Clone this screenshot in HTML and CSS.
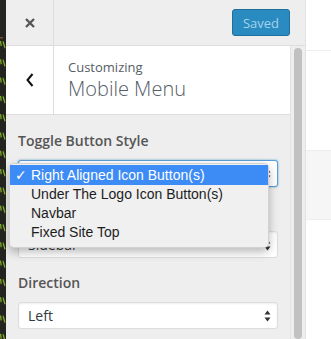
FILE: index.html
```html
<!DOCTYPE html>
<html lang="en">
  <head>
    <meta charset="UTF-8" />
    <meta name="viewport" content="width=device-width, initial-scale=1.0" />
    <title>Customizing Mobile Menu</title>
    <link rel="stylesheet" href="styles.css">
  </head>
  <body>
    <div class="editor-strip">
      <svg width="6" height="339" viewBox="0 0 6 339">
        <defs>
          <pattern id="code" x="0" y="41" width="6" height="18.3" patternUnits="userSpaceOnUse">
            <path d="M0.5 0 L1.2 5 M3 0.5 L5 7" stroke="#86b32a" stroke-width="1.2" fill="none" />
          </pattern>
        </defs>
        <rect x="0" y="37" width="3" height="1.5" fill="#7a4a2a" />
        <rect x="0" y="41" width="6" height="298" fill="url(#code)" />
      </svg>
    </div>

    <div class="customizer">
      <div class="customizer-header">
        <button class="close-btn" aria-label="Close">
          <svg width="10" height="10" viewBox="0 0 10 10">
            <path d="M1 1 L9 9 M9 1 L1 9" stroke="#555" stroke-width="2.3" />
          </svg>
        </button>
        <button class="save-btn">Saved</button>
      </div>

      <div class="customizer-body">
        <div class="panel">
          <div class="section-title">
            <button class="back-btn" aria-label="Back">
              <svg width="8" height="14" viewBox="0 0 8 14">
                <path d="M6.5 1 L1.5 7 L6.5 13" stroke="#111" stroke-width="2" fill="none" />
              </svg>
            </button>
            <div class="title">
              <span class="title-small">Customizing</span>
              <h3 class="title-main">Mobile Menu</h3>
            </div>
          </div>

          <div class="controls">
            <div class="control">
              <label class="control-label">Toggle Button Style</label>
              <div class="select-wrap">
                <div class="select focused">
                  <span class="covered">Right Aligned Icon Button(s)</span>
                  <svg class="arrows" width="7" height="12" viewBox="0 0 7 12">
                    <path d="M3.5 0.5 L6.5 4.5 L0.5 4.5 Z M3.5 11.5 L6.5 7.5 L0.5 7.5 Z" fill="#333" />
                  </svg>
                </div>
                <ul class="popup">
                  <li class="active"><span class="check">✓</span>Right Aligned Icon Button(s)</li>
                  <li><span class="check"></span>Under The Logo Icon Button(s)</li>
                  <li><span class="check"></span>Navbar</li>
                  <li><span class="check"></span>Fixed Site Top</li>
                </ul>
              </div>
            </div>

            <div class="control">
              <label class="control-label covered">Menu Style</label>
              <div class="select">
                <span class="sidebar-text">Sidebar</span>
                <svg class="arrows" width="7" height="12" viewBox="0 0 7 12">
                  <path d="M3.5 0.5 L6.5 4.5 L0.5 4.5 Z M3.5 11.5 L6.5 7.5 L0.5 7.5 Z" fill="#333" />
                </svg>
              </div>
            </div>

            <div class="control">
              <label class="control-label">Direction</label>
              <div class="select">
                <span>Left</span>
                <svg class="arrows" width="7" height="12" viewBox="0 0 7 12">
                  <path d="M3.5 0.5 L6.5 4.5 L0.5 4.5 Z M3.5 11.5 L6.5 7.5 L0.5 7.5 Z" fill="#333" />
                </svg>
              </div>
            </div>
          </div>
        </div>

        <div class="scrollbar">
          <div class="thumb"></div>
        </div>
      </div>
    </div>

    <div class="preview">
      <div class="preview-top"></div>
      <div class="preview-gap"></div>
      <div class="preview-band"></div>
    </div>
  </body>
</html>
```

FILE: styles.css
```css
body {
  display: flex;
  height: 100vh;
  margin: 0;
  overflow: hidden;
  background-color: #fff;
  font-family: "Open Sans", "Noto Sans", sans-serif;
}

.editor-strip {
  width: 6px;
  flex-shrink: 0;
  background-color: #23241f;
}

.editor-strip svg {
  display: block;
}

.customizer {
  width: 299px;
  flex-shrink: 0;
  display: flex;
  flex-direction: column;
  background-color: #eee;
}

.customizer-header {
  height: 45px;
  flex-shrink: 0;
  display: flex;
  justify-content: space-between;
  align-items: center;
  border-bottom: 1px solid #ddd;
}

button {
  font-family: inherit;
  border: none;
  background: none;
  padding: 0;
  cursor: pointer;
}

.close-btn {
  width: 48px;
  height: 45px;
  box-sizing: border-box;
  display: flex;
  justify-content: center;
  align-items: center;
  border-right: 1px solid #ddd;
}

.save-btn {
  width: 58px;
  height: 27px;
  margin-right: 15px;
  box-sizing: border-box;
  background-color: #2a8bc0;
  border: 1px solid #1f6e9b;
  border-radius: 3px;
  color: #a3d3ec;
  font-size: 13px;
}

.customizer-body {
  flex: 1;
  display: flex;
  min-height: 0;
  overflow: hidden;
}

.panel {
  width: 284px;
  flex-shrink: 0;
  overflow: hidden;
}

.section-title {
  display: flex;
  background-color: #fff;
  border-bottom: 1px solid #ddd;
}

.back-btn {
  width: 48px;
  box-sizing: border-box;
  display: flex;
  justify-content: center;
  align-items: center;
  border-right: 1px solid #ddd;
}

.title {
  padding: 12px 0 12px 14px;
  color: #555d66;
}

.title-small {
  display: block;
  font-size: 13px;
  line-height: 18px;
}

.title-main {
  margin: 0;
  font-size: 20px;
  line-height: 26px;
  font-weight: 300;
}

.controls {
  padding: 15px 12px 0;
}

.control {
  margin-bottom: 14px;
}

.control-label {
  display: block;
  margin-bottom: 9px;
  font-size: 14px;
  line-height: 21px;
  font-weight: 600;
  color: #555;
}

/* text hidden behind the open dropdown */
.covered {
  visibility: hidden;
}

.select-wrap {
  position: relative;
}

.select {
  height: 27px;
  box-sizing: border-box;
  display: flex;
  justify-content: space-between;
  align-items: center;
  padding: 0 6px 0 9px;
  background-color: #fff;
  border: 1px solid #ddd;
  border-radius: 3px;
  box-shadow: inset 0 1px 2px rgba(0, 0, 0, 0.07);
  font-size: 14px;
  color: #32373c;
}

.select.focused {
  border-color: #5b9dd9;
  box-shadow: 0 0 2px rgba(30, 140, 190, 0.8);
}

.popup {
  position: absolute;
  top: 3px;
  left: -9px;
  z-index: 2;
  width: 260px;
  margin: 0;
  padding: 1px 0 5px;
  list-style: none;
  box-sizing: border-box;
  background-color: #f0f0f0;
  border: 1px solid rgba(0, 0, 0, 0.12);
  border-radius: 5px;
  box-shadow: 0 4px 10px rgba(0, 0, 0, 0.28);
  font-family: "Liberation Sans", Arial, sans-serif;
  font-size: 14px;
  line-height: 19px;
  color: #1d1d1d;
}

.popup li {
  padding-left: 5px;
  white-space: nowrap;
}

.popup li.active {
  background-color: #3d8cf6;
  color: #fff;
  line-height: 20px;
}

.check {
  display: inline-block;
  width: 16px;
  font-family: "DejaVu Sans", sans-serif;
  font-weight: 700;
  font-size: 14px;
}

.scrollbar {
  width: 15px;
  box-sizing: border-box;
  padding: 2px 0 0 3px;
  border-left: 1px solid #e3e3e3;
}

.thumb {
  width: 8px;
  height: 100%;
  border-radius: 4px;
  background-color: #c1c1c1;
}

.preview {
  flex: 1;
  border-left: 1px solid #e2e2e2;
  background-color: #fff;
}

.preview-top {
  height: 50px;
  border-bottom: 1px solid #eee;
}

.preview-gap {
  height: 99px;
}

.preview-band {
  height: 68px;
  background-color: #f6f6f6;
  border-top: 1px solid #eee;
  border-bottom: 1px solid #eee;
}
```
